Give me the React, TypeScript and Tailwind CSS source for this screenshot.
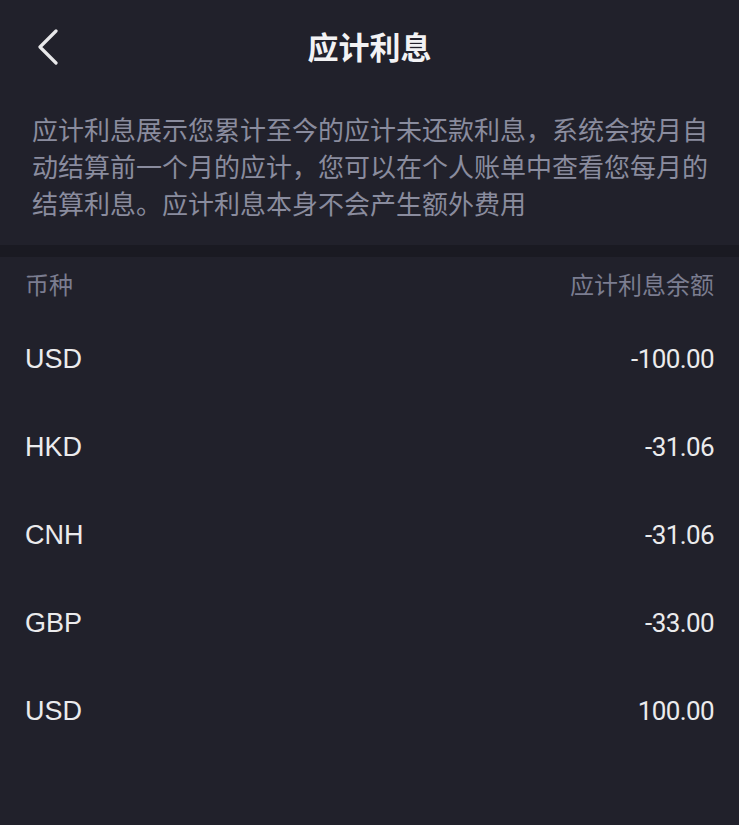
const rows = [
  { ccy: "USD", amount: "-100.00" },
  { ccy: "HKD", amount: "-31.06" },
  { ccy: "CNH", amount: "-31.06" },
  { ccy: "GBP", amount: "-33.00" },
  { ccy: "USD", amount: "100.00" },
];

const cjk = "font-['Noto_Sans_CJK_SC',sans-serif]";

export default function App() {
  return (
    <div className={`min-h-[825px] w-full bg-[#21212b] ${cjk}`}>
      {/* nav bar */}
      <div className="flex h-[93px] items-center">
        <div className="flex w-[120px] items-center pl-[37px]">
          <svg width="22" height="36" viewBox="0 0 22 36" fill="none">
            <path
              d="M19 2 L3 18 L19 34"
              stroke="#e8e8ea"
              strokeWidth="3.2"
              strokeLinecap="round"
              strokeLinejoin="round"
            />
          </svg>
        </div>
        <h1 className="flex-1 pb-[2px] text-center text-[31px] font-bold leading-none text-[#f2f2f4]">
          应计利息
        </h1>
        <div className="w-[120px]" />
      </div>

      {/* description */}
      <p className="pl-[32px] pr-[20px] pt-[17px] pb-[24px] text-[26px] leading-[37px] text-[#8a8c9e]">
        应计利息展示您累计至今的应计未还款利息，系统会按月自动结算前一个月的应计，您可以在个人账单中查看您每月的结算利息。应计利息本身不会产生额外费用
      </p>

      <div className="h-[12px] bg-[#1a1a22]" />

      {/* table */}
      <div className="px-[25px]">
        <div className="flex h-[58px] items-center justify-between pb-[4px] text-[24px] text-[#7b7d90]">
          <span>币种</span>
          <span>应计利息余额</span>
        </div>
        {rows.map((r, i) => (
          <div key={i} className="flex h-[88px] items-center justify-between text-[#ebebed]">
            <span className="font-['Liberation_Sans',sans-serif] text-[27px]">{r.ccy}</span>
            <span className="font-['Roboto',sans-serif] text-[26px] tracking-[-0.6px]">{r.amount}</span>
          </div>
        ))}
      </div>
    </div>
  );
}
